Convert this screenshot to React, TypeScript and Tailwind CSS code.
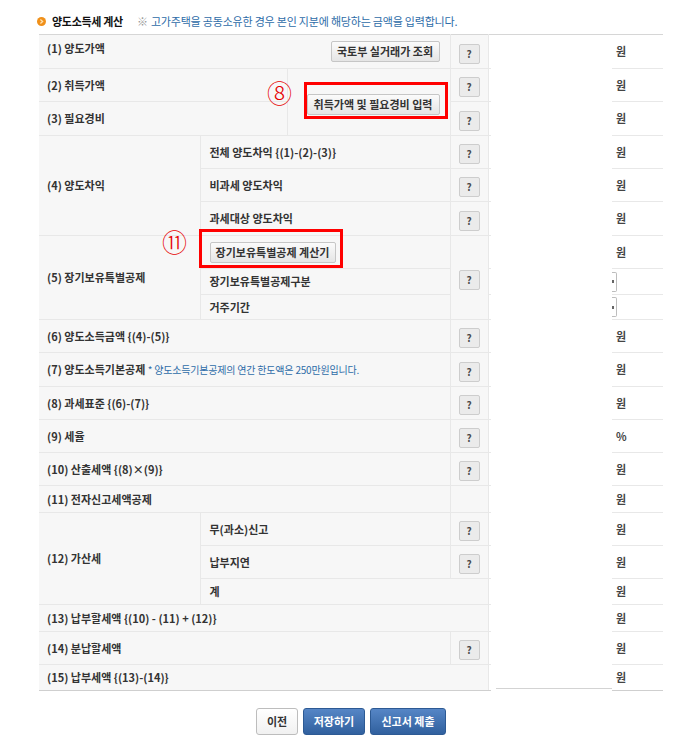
import type { ReactNode } from 'react'

// 셀 공통 스타일
const LAB = 'bg-[#f7f7f7] border-b border-[#e8e8e8] pl-[8px] text-[11px] font-bold text-[#333] whitespace-nowrap'
const SUB = 'bg-[#f7f7f7] border-b border-[#e8e8e8] pl-[9px] text-[11px] font-bold text-[#333] whitespace-nowrap'
const Q = 'bg-[#f7f7f7] border-b border-l border-[#e8e8e8] text-center'
const STUB = 'border-b border-l border-[#e8e8e8]'
const UNIT = 'border-b border-[#e8e8e8] pl-[4px] text-[11px] font-bold text-[#444]'
const LAST = ' border-b-[#cfcfcf]'

function HelpBtn() {
  return (
    <button
      type="button"
      className="inline-flex items-center justify-center w-[21px] h-[20px] border border-[#cdcdcd] bg-[#ebebeb] rounded-[2px] text-[10px] font-bold text-[#4a4a4a] leading-none align-middle"
    >
      ?
    </button>
  )
}

function GrayBtn({ children, className }: { children: ReactNode; className: string }) {
  return (
    <button
      type="button"
      className={`inline-flex items-center justify-center h-[21px] border border-[#c6c6c6] rounded-[2px] bg-gradient-to-b from-[#fbfbfb] to-[#e5e5e5] text-[11px] font-bold text-[#333] leading-none whitespace-nowrap align-middle ${className}`}
    >
      {children}
    </button>
  )
}

function SelectEdge() {
  return (
    <div className="flex items-center h-[20px] w-[5px] border-y border-r border-[#bdbdbd] rounded-r-[2px]">
      <span className="w-[2px] h-[3px] bg-[#666]" />
    </div>
  )
}

export default function App() {
  return (
    <div className="relative w-[680px] h-[754px] bg-white font-['Noto_Sans_CJK_KR',sans-serif] pl-[39px] pt-[12px]">
      {/* 제목 */}
      <div className="flex items-center h-[18px] -ml-[2px]">
        <svg width="9" height="9" viewBox="0 0 9 9" className="shrink-0">
          <circle cx="4.5" cy="4.5" r="4.5" fill="#f0901a" />
          <path d="M3.4 2.6 L5.6 4.5 L3.4 6.4" stroke="#ffe2b0" strokeWidth="1.3" fill="none" />
        </svg>
        <span className="ml-[6px] text-[11px] font-bold text-[#111] tracking-[-0.3px]">양도소득세 계산</span>
        <span className="ml-[14px] text-[11px] text-[#999]">※</span>
        <span className="ml-[3px] text-[11px] text-[#2e6ca8] tracking-[-0.2px]">
          고가주택을 공동소유한 경우 본인 지분에 해당하는 금액을 입력합니다.
        </span>
      </div>

      <table className="mt-[4px] w-[624px] table-fixed border-collapse border-t border-[#d6d6d6]">
        <colgroup>
          <col className="w-[161px]" />
          <col className="w-[87px]" />
          <col className="w-[163px]" />
          <col className="w-[38px]" />
          <col className="w-[3px]" />
          <col className="w-[121px]" />
          <col className="w-[51px]" />
        </colgroup>
        <tbody>
          <tr className="h-[34px]">
            <td colSpan={3} className={LAB}>
              <div className="flex items-center justify-between pr-[10px]">
                <span className="pb-[6px]">(1) 양도가액</span>
                <GrayBtn className="w-[109px]">국토부 실거래가 조회</GrayBtn>
              </div>
            </td>
            <td className={Q}><HelpBtn /></td>
            <td className={STUB} />
            <td rowSpan={21} className="bg-white p-0 align-bottom">
              <div className="ml-[5px] mb-[2px] border-b border-[#d3d3d3]" />
            </td>
            <td className={UNIT}>원</td>
          </tr>
          <tr className="h-[33px]">
            <td colSpan={2} className={`${LAB} border-r`}>(2) 취득가액</td>
            <td rowSpan={2} className="bg-[#f7f7f7] border-b border-[#e8e8e8] text-right pr-[10px]">
              <GrayBtn className="w-[133px]">취득가액 및 필요경비 입력</GrayBtn>
            </td>
            <td className={Q}><HelpBtn /></td>
            <td className={STUB} />
            <td className={UNIT}>원</td>
          </tr>
          <tr className="h-[34px]">
            <td colSpan={2} className={`${LAB} border-r`}>(3) 필요경비</td>
            <td className={Q}><HelpBtn /></td>
            <td className={STUB} />
            <td className={UNIT}>원</td>
          </tr>

          <tr className="h-[33px]">
            <td rowSpan={3} className={`${LAB} border-r`}>(4) 양도차익</td>
            <td colSpan={2} className={SUB}>전체 양도차익 {'{(1)-(2)-(3)}'}</td>
            <td className={Q}><HelpBtn /></td>
            <td className={STUB} />
            <td className={UNIT}>원</td>
          </tr>
          <tr className="h-[33px]">
            <td colSpan={2} className={SUB}>비과세 양도차익</td>
            <td className={Q}><HelpBtn /></td>
            <td className={STUB} />
            <td className={UNIT}>원</td>
          </tr>
          <tr className="h-[34px]">
            <td colSpan={2} className={SUB}>과세대상 양도차익</td>
            <td className={Q}><HelpBtn /></td>
            <td className={STUB} />
            <td className={UNIT}>원</td>
          </tr>

          <tr className="h-[33px]">
            <td rowSpan={3} className={`${LAB} border-r`}>(5) 장기보유특별공제</td>
            <td colSpan={2} className={SUB}>
              <GrayBtn className="w-[126px]">장기보유특별공제 계산기</GrayBtn>
            </td>
            <td rowSpan={3} className={Q}><HelpBtn /></td>
            <td className={STUB} />
            <td className={UNIT}>원</td>
          </tr>
          <tr className="h-[26px]">
            <td colSpan={2} className={SUB}>장기보유특별공제구분</td>
            <td className={STUB} />
            <td className="border-b border-[#e8e8e8]"><SelectEdge /></td>
          </tr>
          <tr className="h-[25px]">
            <td colSpan={2} className={SUB}>거주기간</td>
            <td className={STUB} />
            <td className="border-b border-[#e8e8e8]"><SelectEdge /></td>
          </tr>

          <tr className="h-[33px]">
            <td colSpan={3} className={LAB}>(6) 양도소득금액 {'{(4)-(5)}'}</td>
            <td className={Q}><HelpBtn /></td>
            <td className={STUB} />
            <td className={UNIT}>원</td>
          </tr>
          <tr className="h-[34px]">
            <td colSpan={3} className={LAB}>
              (7) 양도소득기본공제{' '}
              <span className="font-normal text-[10px] text-[#2e6ca8] tracking-[-0.2px]">
                * 양도소득기본공제의 연간 한도액은 250만원입니다.
              </span>
            </td>
            <td className={Q}><HelpBtn /></td>
            <td className={STUB} />
            <td className={UNIT}>원</td>
          </tr>
          <tr className="h-[33px]">
            <td colSpan={3} className={LAB}>(8) 과세표준 {'{(6)-(7)}'}</td>
            <td className={Q}><HelpBtn /></td>
            <td className={STUB} />
            <td className={UNIT}>원</td>
          </tr>
          <tr className="h-[33px]">
            <td colSpan={3} className={LAB}>(9) 세율</td>
            <td className={Q}><HelpBtn /></td>
            <td className={STUB} />
            <td className={UNIT}>%</td>
          </tr>
          <tr className="h-[33px]">
            <td colSpan={3} className={LAB}>(10) 산출세액 {'{(8)×(9)}'}</td>
            <td className={Q}><HelpBtn /></td>
            <td className={STUB} />
            <td className={UNIT}>원</td>
          </tr>
          <tr className="h-[27px]">
            <td colSpan={3} className={LAB}>(11) 전자신고세액공제</td>
            <td className={Q} />
            <td className={STUB} />
            <td className={UNIT}>원</td>
          </tr>

          <tr className="h-[33px]">
            <td rowSpan={3} className={`${LAB} border-r`}>(12) 가산세</td>
            <td colSpan={2} className={SUB}>무(과소)신고</td>
            <td className={Q}><HelpBtn /></td>
            <td className={STUB} />
            <td className={UNIT}>원</td>
          </tr>
          <tr className="h-[33px]">
            <td colSpan={2} className={SUB}>납부지연</td>
            <td className={Q}><HelpBtn /></td>
            <td className={STUB} />
            <td className={UNIT}>원</td>
          </tr>
          <tr className="h-[26px]">
            <td colSpan={3} className={SUB}>계</td>
            <td className={STUB} />
            <td className={UNIT}>원</td>
          </tr>

          <tr className="h-[27px]">
            <td colSpan={4} className={LAB}>(13) 납부할세액 {'{(10) - (11) + (12)}'}</td>
            <td className={STUB} />
            <td className={UNIT}>원</td>
          </tr>
          <tr className="h-[33px]">
            <td colSpan={3} className={LAB}>(14) 분납할세액</td>
            <td className={Q}><HelpBtn /></td>
            <td className={STUB} />
            <td className={UNIT}>원</td>
          </tr>
          <tr className="h-[26px]">
            <td colSpan={4} className={LAB + LAST}>(15) 납부세액 {'{(13)-(14)}'}</td>
            <td className={STUB + LAST} />
            <td className={UNIT + LAST}>원</td>
          </tr>
        </tbody>
      </table>

      {/* 하단 버튼 */}
      <div className="mt-[17px] w-[624px] flex justify-center gap-[5px]">
        <button type="button" className="w-[42px] h-[27px] border border-[#bdbdbd] rounded-[3px] bg-gradient-to-b from-white to-[#f1f1f1] text-[11px] font-bold text-[#333]">
          이전
        </button>
        <button type="button" className="w-[62px] h-[27px] border border-[#2d5a94] rounded-[3px] bg-gradient-to-b from-[#5686c6] to-[#30609e] text-[11px] font-bold text-white">
          저장하기
        </button>
        <button type="button" className="w-[76px] h-[27px] border border-[#2d5a94] rounded-[3px] bg-gradient-to-b from-[#5686c6] to-[#30609e] text-[11px] font-bold text-white">
          신고서 제출
        </button>
      </div>

      {/* 안내 표시 (빨간 박스, 번호) */}
      <div className="absolute left-[304px] top-[82px] w-[144px] h-[37px] border-[3px] border-[#ff0000] pointer-events-none" />
      <div className="absolute left-[199px] top-[229px] w-[144px] h-[39px] border-[3px] border-[#ff0000] pointer-events-none" />
      <span className="absolute left-[267px] top-[80px] text-[25px] leading-none text-[#e60000] font-light">⑧</span>
      <span className="absolute left-[162px] top-[229px] text-[25px] leading-none text-[#e60000] font-light">⑪</span>
    </div>
  )
}
